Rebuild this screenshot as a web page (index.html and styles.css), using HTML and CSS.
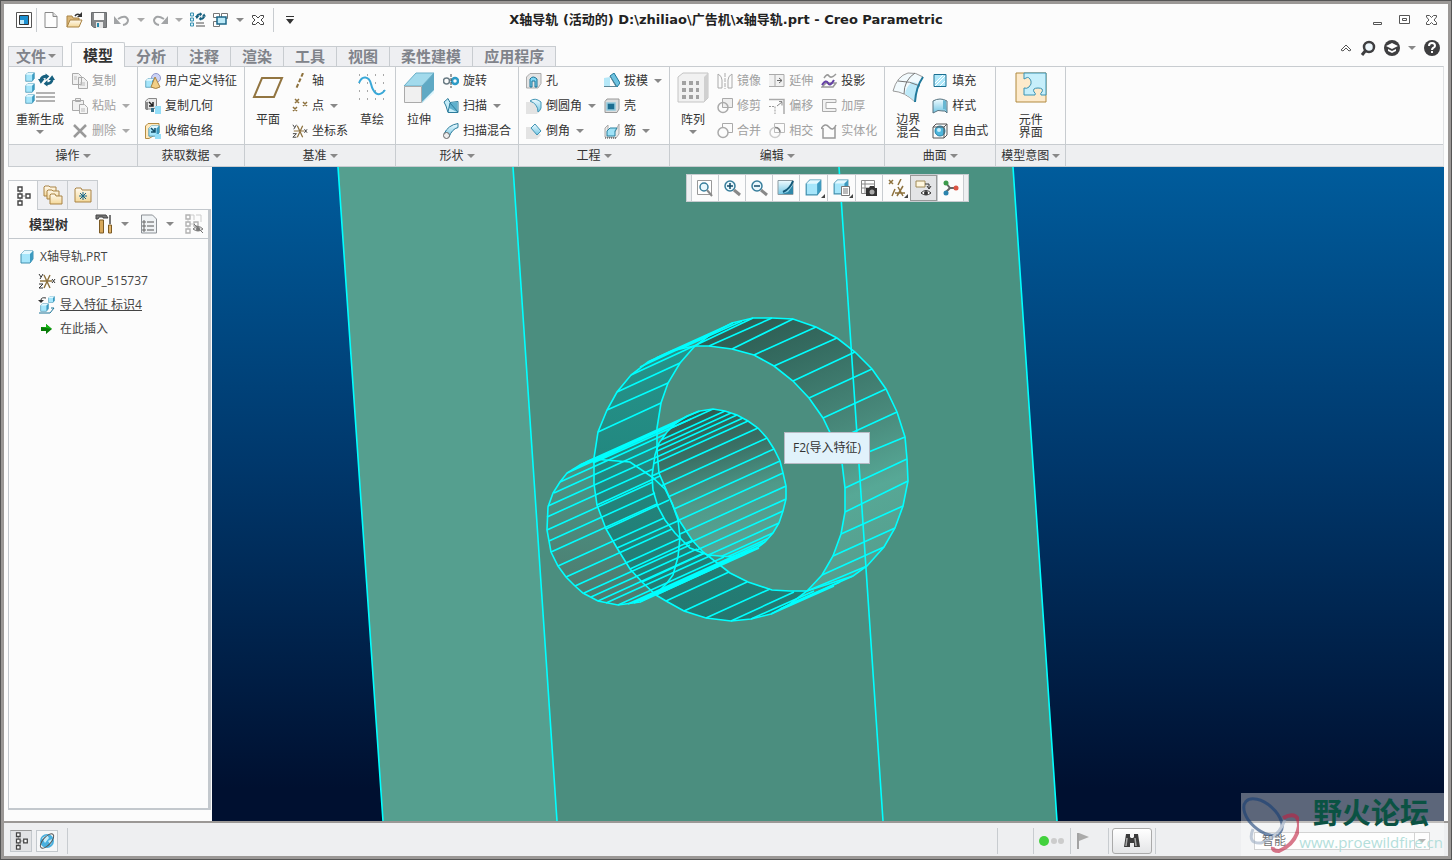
FILE: index.html
```html
<!DOCTYPE html>
<html lang="zh-Hans">
<head>
  <meta charset="UTF-8">
  <meta name="viewport" content="width=device-width, initial-scale=1.0">
  <title>X轴导轨 - Creo Parametric</title>
  <link rel="stylesheet" href="styles.css">
</head>
<body>
  <!-- shared icons -->
  <svg class="defs" width="0" height="0" aria-hidden="true">
    <symbol id="i-tree" viewBox="0 0 16 20">
      <path d="M5 5v10M5 10h5" stroke="#888" fill="none"/>
      <path d="M3 1h4v4H3zM3 8h4v4H3zM3 15h4v4H3zM11 8h4v4h-4z" fill="#fff" stroke="#444" stroke-width="1.4"/>
    </symbol>
    <symbol id="i-csys" viewBox="0 0 18 18">
      <path d="M2 9h12M6 3l6 13M12 3L6 16" stroke="#8d713d" stroke-width="1.4" fill="none"/>
      <path d="M1 2l2 3M5 2L2 7M14 7l3 4M17 7l-3 4M1 12h4l-4 4h4" stroke="#333" fill="none"/>
    </symbol>
    <symbol id="i-refresh" viewBox="0 0 18 14">
      <path d="M3 7q1-4 6-4" stroke="#17607f" stroke-width="3" fill="none"/>
      <path d="M8 0l4 3-4 4zM0 6h7L3 11zM18 7h-7l4-5z" fill="#17607f"/>
      <path d="M15 7q-1 4-6 4" stroke="#17607f" stroke-width="3" fill="none"/>
      <path d="M10 7v7l-4-3z" fill="#17607f"/>
    </symbol>
    <symbol id="i-cube" viewBox="0 0 14 14">
      <path d="M1 4l3-3h9v8l-3 4H1z" fill="#a6e6fb" stroke="#3f8fae"/>
      <path d="M1 4l3-3h9l-3 3z" fill="#e2f8ff"/><path d="M10 4l3-3v8l-3 4z" fill="#3c9ac0"/>
    </symbol>
    <linearGradient id="g-blue" x2="0" y2="1"><stop offset="0" stop-color="#effbff"/><stop offset="1" stop-color="#72c6e4"/></linearGradient>
    <linearGradient id="g-fold" x2="0" y2="1"><stop offset="0" stop-color="#fffaf0"/><stop offset="1" stop-color="#f4d898"/></linearGradient>
  </svg>

  <div class="window">
    <header class="titlebar">
      <div class="quick">
        <button aria-label="窗口"><svg width="16" height="16"><path d="M.5.5h15v15H.5z" fill="#fff" stroke="#555"/><path d="M3.500 3.500h9v9h-9z" fill="#1b8fd0" stroke="#333"/><path d="M4 8h4v4H4z" fill="#bde9fb"/></svg></button>
        <i class="sep"></i>
        <button aria-label="新建"><svg width="16" height="16"><path d="M2 .5h8l4 4v11H2z" fill="#fdfdfd" stroke="#888"/><path d="M10 .5v4h4" fill="#ddd" stroke="#888"/></svg></button>
        <button aria-label="打开"><svg width="18" height="16"><path d="M1 15V4h5l1 2h6v3" fill="#dcb878" stroke="#a98344"/><path d="M1 15l3-7h12l-3 7z" fill="url(#g-fold)" stroke="#a98344"/><path d="M9 4q2-3 5-1" fill="none" stroke="#333" stroke-width="1.5"/><path d="M16 0v5h-5z" fill="#333"/></svg></button>
        <button aria-label="保存"><svg width="16" height="16"><path d="M.5.5h15v15H3l-2.500-2z" fill="#848688" stroke="#6c6e70"/><path d="M3 1h10v7H3z" fill="#fafafa"/><path d="M5 10h7v6H5z" fill="#e8e8e8"/><path d="M6 11h2v4H6z" fill="#278aac"/></svg></button>
        <button aria-label="撤消"><svg width="16" height="14"><path d="M4 6q8-5 10 1 0 4-5 5" fill="none" stroke="#a2a4a6" stroke-width="2"/><path d="M0 3v8h7z" fill="#a2a4a6"/></svg></button>
        <button aria-label="撤消列表"><i class="caret light"></i></button>
        <button aria-label="重做"><svg width="16" height="14"><path d="M12 6Q4 1 2 7q0 4 5 5" fill="none" stroke="#a2a4a6" stroke-width="2"/><path d="M16 3v8H9z" fill="#a2a4a6"/></svg></button>
        <button aria-label="重做列表"><i class="caret light"></i></button>
        <button aria-label="重新生成模型"><svg width="16" height="16"><path d="M.5 1h3v3h-3zM.5 6h3v3h-3zM.5 11h3v3h-3z" fill="#d7f3fc" stroke="#3b91b1"/><path d="M6 11h8M6 14h9" stroke="#888" stroke-width="1.5"/><use href="#i-refresh" x="5" width="11" height="9"/></svg></button>
        <button aria-label="窗口切换"><svg width="16" height="16"><path d="M.5 1.500h6v4h-6zM8.500 1.500h6v5h-6zM.5 9.500h6v5h-6z" fill="#fff" stroke="#777"/><path d="M4 5h9v7H4z" fill="#bdeaf8" stroke="#1c6788" stroke-width="1.500"/></svg></button>
        <button aria-label="窗口列表"><i class="caret"></i></button>
        <button aria-label="关闭窗口"><svg width="14" height="14"><path d="M1.500 2.500h3L7 5l2.500-2.500h3v2L10 7l2.500 2.500v2h-3L7 9l-2.500 2.500h-3v-2L4 7 1.500 4.500z" fill="#fff" stroke="#444"/></svg></button>
        <i class="sep"></i>
        <button aria-label="自定义"><svg width="10" height="10"><path d="M1 1h8v1H1zM1 4h8L5 9z" fill="#333"/></svg></button>
      </div>
      <h1>X轴导轨 (活动的) D:\zhiliao\广告机\x轴导轨.prt - Creo Parametric</h1>
      <div class="winctl">
        <button aria-label="最小化"><svg width="12" height="12"><path d="M1.500 8.500h8v2h-8z" fill="#fff" stroke="#555"/></svg></button>
        <button aria-label="最大化"><svg width="12" height="12"><path d="M.5 1.500h10v8H.5zM3.500 4.500h4v2h-4z" fill="#fff" stroke="#555"/></svg></button>
        <button aria-label="关闭"><svg width="12" height="12"><path d="M.5 1.500h3l2 2 2-2h3v1.500L8 6l2.500 2.500v2h-3l-2-2-2 2h-3v-2L3 6 .5 3z" fill="#fff" stroke="#555"/></svg></button>
      </div>
    </header>

    <nav class="tabs">
      <button class="file">文件<i class="caret"></i></button>
      <button class="active">模型</button>
      <button>分析</button>
      <button>注释</button>
      <button>渲染</button>
      <button>工具</button>
      <button>视图</button>
      <button>柔性建模</button>
      <button>应用程序</button>
      <div class="help">
        <button aria-label="折叠功能区"><svg width="12" height="10"><path d="M1 7l5-5 5 5-2 1-3-3-3 3z" fill="#fff" stroke="#555"/></svg></button>
        <button aria-label="搜索"><svg width="16" height="16"><circle cx="9" cy="7" r="5" fill="#eef7fc" stroke="#3e3e40" stroke-width="2.500"/><path d="M6 10l-4 5" stroke="#3e3e40" stroke-width="3"/></svg></button>
        <button aria-label="学习"><svg width="16" height="16"><circle cx="8" cy="8" r="8" fill="#3e3e40"/><path d="M2 6l6-3 6 3-6 3zM4 9l4 2 4-2v2l-4 2-4-2z" fill="#fff"/></svg></button>
        <button aria-label="学习列表"><i class="caret"></i></button>
        <button aria-label="帮助"><svg width="16" height="16"><circle cx="8" cy="8" r="8" fill="#3e3e40"/><path d="M5 6q0-3 3-3t3 3q0 1-2 2-1 1-1 2" fill="none" stroke="#fff" stroke-width="2"/><path d="M7 11h2v2H7z" fill="#fff"/></svg></button>
      </div>
    </nav>

    <div class="ribbon">
      <section class="group">
        <div class="tools">
          <button class="big"><svg width="32" height="32"><g transform="translate(1 0)"><use href="#i-cube" width="10" height="10"/><use href="#i-cube" y="11" width="10" height="10"/><use href="#i-cube" y="22" width="10" height="10"/></g><path d="M12 21h19M12 25h19M12 29h19" stroke="#999" stroke-width="1.500"/><use href="#i-refresh" x="14" y="1" width="17" height="14"/></svg><span>重新生成</span><i class="caret"></i></button>
          <div class="col">
            <button class="off"><svg width="16" height="16"><path d="M.5.5h6l3 3v8h-9zM6.500 4.500h5l4 4v7h-9z" fill="#f1f1f1" stroke="#aaa"/><path d="M8 10h5M8 12h5M2 4h3M2 6h3" stroke="#bbb"/></svg>复制</button>
            <button class="off"><svg width="16" height="16"><path d="M.5 2.500h11v10H.5zM3.500.5h5v3h-5z" fill="#f1f1f1" stroke="#aaa"/><path d="M7.500 6.500h5l3 3v6h-8z" fill="#f5f5f5" stroke="#aaa"/><path d="M9 11h4M9 13h4" stroke="#bbb"/></svg>粘贴<i class="caret light"></i></button>
            <button class="off"><svg width="16" height="16"><path d="M2 2l12 12M14 2L2 14" stroke="#999" stroke-width="2.500"/></svg>删除<i class="caret light"></i></button>
          </div>
        </div>
        <button class="name">操作<i class="caret"></i></button>
      </section>

      <section class="group">
        <div class="tools">
          <div class="col">
            <button><svg width="16" height="16"><circle cx="11" cy="5" r="4.500" fill="#ccd3f6" stroke="#8e96c9"/><use href="#i-cube" y="5" width="10" height="10"/><path d="M10 4l5 10q-4 3-9 0z" fill="#f1cf86" stroke="#a98344"/></svg>用户定义特征</button>
            <button><svg width="16" height="16"><path d="M.5 3l3-2.500h8V9l-3 2h-8z" fill="#e8e8e8" stroke="#888"/><path d="M1 4v8h2V4" fill="#888"/><path d="M4 4l4 4M8 4v4H4" fill="none" stroke="#222" stroke-width="1.500"/><path d="M10 8h6v8h-6z" fill="#94def8"/><path d="M6 10h3v4H6z" fill="#35718a"/></svg>复制几何</button>
            <button><svg width="16" height="16"><path d="M.5 3L3 .5h11v9L4 15.500H.5z" fill="#ffe9bd" stroke="#b48d44"/><use href="#i-cube" x="3" y="2" width="12" height="12"/><path d="M6 5l4 4M10 5v4H6" fill="none" stroke="#134f69" stroke-width="1.500"/><path d="M10 11h6v5h-6z" fill="#94def8"/></svg>收缩包络</button>
          </div>
        </div>
        <button class="name">获取数据<i class="caret"></i></button>
      </section>

      <section class="group">
        <div class="tools">
          <button class="big"><svg width="32" height="32"><path d="M10 6h20l-8 19H2z" fill="#fcfcfc" stroke="#927541" stroke-width="2"/></svg><span>平面</span></button>
          <div class="col">
            <button><svg width="16" height="16"><path d="M11 0L4 16" stroke="#8d713d" stroke-width="2" stroke-dasharray="4 2"/></svg>轴</button>
            <button><svg width="16" height="16"><path d="M3 1l4 4M7 1L3 5M11 4l4 4M15 4l-4 4M1 9l4 4M5 9l-4 4" stroke="#8d713d" stroke-width="1.500"/></svg>点<i class="caret"></i></button>
            <button><svg width="16" height="16"><use href="#i-csys" width="16" height="16"/></svg>坐标系</button>
          </div>
          <button class="big"><svg width="32" height="32"><path d="M3 3h26M3 11h26M3 19h26M3 27h26" stroke="#555" stroke-dasharray="1 7"/><path d="M3 11C6 3 13 4 15 12s7 15 14 6" fill="none" stroke="#39a8d8" stroke-width="2"/></svg><span>草绘</span></button>
        </div>
        <button class="name">基准<i class="caret"></i></button>
      </section>

      <section class="group">
        <div class="tools">
          <button class="big"><svg width="32" height="32"><path d="M1 14L13 1h18L19 14z" fill="#a2daec" stroke="#6aafc8"/><path d="M19 14L31 1v19L19 31z" fill="#5fa9c4"/><path d="M19 30l12-12v3L19 31z" fill="#dff6fd"/><path d="M1.500 14.500h17v16h-17z" fill="#f0f0f0" stroke="#aaa"/></svg><span>拉伸</span></button>
          <div class="col">
            <button><svg width="16" height="16"><circle cx="3.500" cy="8" r="3" fill="none" stroke="#6a7b84" stroke-width="1.500"/><circle cx="12" cy="8" r="3" fill="none" stroke="#2d9bc6" stroke-width="2.500"/><path d="M8 1v14" stroke="#444" stroke-dasharray="3 1"/></svg>旋转</button>
            <button><svg width="16" height="16"><path d="M1 4l4-3.500 2 4 8-1v11H5L3 8z" fill="#c4ecf8" stroke="#2d7c9b"/><path d="M7 5l7-1v10l-8-4z" fill="#5fb0cd"/><path d="M5 14l2-9 8 9" fill="none" stroke="#2d7c9b"/></svg>扫描<i class="caret"></i></button>
            <button><svg width="16" height="16"><path d="M1 11Q5 2 15 .5v4Q9 6 6 14z" fill="url(#g-blue)" stroke="#2d7c9b"/><circle cx="3.500" cy="12.500" r="3" fill="#eee" stroke="#666"/></svg>扫描混合</button>
          </div>
        </div>
        <button class="name">形状<i class="caret"></i></button>
      </section>

      <section class="group">
        <div class="tools">
          <div class="col">
            <button><svg width="16" height="16"><path d="M.5 4L4 .5h11v10L12 15H.5z" fill="#e4e4e4" stroke="#aaa"/><path d="M4 14V6q3-4 7 0v8H9V8H6v6z" fill="#7fd6f4" stroke="#1b7396"/></svg>孔</button>
            <button><svg width="16" height="16"><path d="M0 4h6l9 8-4 4H0z" fill="#e3e3e3"/><path d="M4 3Q9-1 15 4v6q-1 3-3 4 0-8-8-11z" fill="url(#g-blue)" stroke="#4194b4"/></svg>倒圆角<i class="caret"></i></button>
            <button><svg width="16" height="16"><path d="M0 4h6l9 8-4 4H0z" fill="#e3e3e3"/><path d="M5 5l4-4 6 7-4 4z" fill="url(#g-blue)" stroke="#4194b4"/></svg>倒角<i class="caret"></i></button>
          </div>
          <div class="col">
            <button><svg width="16" height="16"><path d="M0 5l6-1v9H0z" fill="#b6e8f8"/><path d="M6 3l4-3 6 10-3 4z" fill="#6ec2e0" stroke="#1f7899"/><path d="M0 13.500h12L6 3" fill="none" stroke="#5d8494"/></svg>拔模<i class="caret"></i></button>
            <button><svg width="16" height="16"><path d="M1 3.500L3 1h12v10l-2 3.500H1z" fill="#ddd" stroke="#999"/><path d="M3 5h8v7H3z" fill="#1c6d90" stroke="#93c9dc" stroke-width="1.500"/></svg>壳</button>
            <button><svg width="16" height="16"><path d="M1 14V5l3-3v6l7 1 4-8v10l-3 4z" fill="#e8e8e8" stroke="#aaa"/><path d="M3 8l3-3h7l-2 3v5H3z" fill="#9fe2f7" stroke="#2a819f"/><path d="M1 15h11" stroke="#333" stroke-dasharray="1 1"/></svg>筋<i class="caret"></i></button>
          </div>
        </div>
        <button class="name">工程<i class="caret"></i></button>
      </section>

      <section class="group">
        <div class="tools">
          <button class="big"><svg width="32" height="32"><path d="M1 5l5-4h25v25l-4 4H1z" fill="#f1f1f1" stroke="#c4c4c4"/><path d="M27 5l4-4v25l-4 4z" fill="#d0d0d0"/><path d="M5 11h17M5 18h17M5 25h17" stroke="#a1a1a1" stroke-width="4" stroke-dasharray="4 3"/></svg><span>阵列</span><i class="caret"></i></button>
          <div class="col">
            <button class="off"><svg width="16" height="16"><path d="M1 1q4 2 4 6v8H1zM15 1q-4 2-4 6v8h4z" fill="none" stroke="#aaa"/><path d="M8 0v16" stroke="#aaa" stroke-dasharray="4 1"/></svg>镜像</button>
            <button class="off"><svg width="16" height="16"><path d="M5.500.5h10v9h-10z" fill="#eee" stroke="#aaa"/><circle cx="6" cy="9.500" r="5" fill="none" stroke="#aaa" stroke-width="1.500"/></svg>修剪</button>
            <button class="off"><svg width="16" height="16"><path d="M5.500.5h10v9h-10z" fill="none" stroke="#aaa"/><circle cx="6" cy="9.500" r="5" fill="#fcfcfc" stroke="#aaa" stroke-width="1.500"/></svg>合并</button>
          </div>
          <div class="col">
            <button class="off"><svg width="16" height="16"><path d="M0 1.500h15v12H0M6 2v11" fill="#f1f1f1" stroke="#aaa"/><path d="M8 7.500h5M10 5l3 2.500L10 10" stroke="#666" fill="none"/></svg>延伸</button>
            <button class="off"><svg width="16" height="16"><path d="M0 1.500h15V16" fill="none" stroke="#aaa" stroke-width="1.500"/><path d="M0 8.500h6V16" fill="none" stroke="#999" stroke-dasharray="2 1"/><path d="M8 8l5-4M10 3.500h3v4" stroke="#888" fill="none"/></svg>偏移</button>
            <button class="off"><svg width="16" height="16"><path d="M5.500.5h10v9h-10z" fill="none" stroke="#bbb"/><circle cx="6" cy="9.500" r="5" fill="none" stroke="#ccc" stroke-width="1.500"/><path d="M6 4.500q5 0 5 5" fill="none" stroke="#888" stroke-width="1.500"/></svg>相交</button>
          </div>
          <div class="col">
            <button><svg width="16" height="16"><path d="M3 5q3-5 5-2t7-2M1 14l4-4h10l-3 4z" fill="none" stroke="#999" stroke-width="1.500"/><path d="M1 12q4-6 6-2t6-3" fill="none" stroke="#6541a5" stroke-width="2"/></svg>投影</button>
            <button class="off"><svg width="16" height="16"><path d="M15 1.500H1.500v12H15v-3H5v-6h10z" fill="#f2f2f2" stroke="#aaa"/></svg>加厚</button>
            <button class="off"><svg width="16" height="16"><path d="M0 6Q4-1 8 4t7-2M2 5v10h12V4" fill="none" stroke="#999" stroke-width="1.500"/></svg>实体化</button>
          </div>
        </div>
        <button class="name">编辑<i class="caret"></i></button>
      </section>

      <section class="group">
        <div class="tools">
          <button class="big"><svg width="32" height="32"><path d="M1 19Q5 4 16 1q8-1 15 4-7 10-8 25Q13 20 1 19z" fill="#f2fafd" stroke="#999"/><path d="M20 10q4 0 8 3-4 7-5 17-4-5-10-8 1-7 7-12z" fill="#bde9f8"/><path d="M12 22Q12 8 23 1M6 9q12 0 22 5" fill="none" stroke="#777"/><path d="M31 5q-7 10-8 25" fill="none" stroke="#20799b" stroke-width="2"/></svg><span>边界<br>混合</span></button>
          <div class="col">
            <button><svg width="16" height="16"><path d="M2 1.500h12v12H2z" fill="#aee7f9" stroke="#1b6f91"/><path d="M3 10l8-8M3 13L13 3M8 13l5-5" stroke="#fff"/></svg>填充</button>
            <button><svg width="16" height="16"><path d="M1 3q7-4 14 0v12q-2-3-4-2-5-2-10 2z" fill="url(#g-blue)" stroke="#54717e"/><path d="M14 3v9q-1-1-3-1V2z" fill="#67b7d2"/></svg>样式</button>
            <button><svg width="16" height="16"><circle cx="8" cy="8" r="5" fill="#4eb6dd" stroke="#2282a6"/><circle cx="7" cy="7" r="2" fill="#c9f0fc"/><path d="M1 4l3-3h11v11l-3 3H1zM1 4h11v11M12 4l3-3" fill="none" stroke="#555"/></svg>自由式</button>
          </div>
        </div>
        <button class="name">曲面<i class="caret"></i></button>
      </section>

      <section class="group last">
        <div class="tools">
          <button class="big"><svg width="32" height="32"><path d="M1 1h30v29H1z" fill="#fdeacb" stroke="#b0893f"/><path d="M9 1h22v22h-5q-1-2 1-3 2-4-4-4t-4 4q2 1 1 3H9v-7q3 1 5-1 3-3 2-6-2-5-5-3l-2 1z" fill="#c6effb" stroke="#3b93b4"/></svg><span>元件<br>界面</span></button>
        </div>
        <button class="name">模型意图<i class="caret"></i></button>
      </section>
      <div class="group rest"><div class="tools"></div><div class="name"></div></div>
    </div>

    <main class="work">
      <aside class="side">
        <div class="side-tabs">
          <button class="active" aria-label="模型树"><svg width="16" height="20"><use href="#i-tree" width="16" height="20"/></svg></button>
          <button aria-label="文件夹浏览器"><svg width="20" height="20"><g fill="url(#g-fold)" stroke="#a98344"><path d="M1 11V2l1-1h4l1 1h6v9z"/><path d="M4 14V6l1-1h4l1 1h6v8z"/><path d="M7 19v-9l1-1h4l1 2h6v8z"/></g></svg></button>
          <button aria-label="收藏夹"><svg width="18" height="18"><path d="M1 16V3l1-1h5l1 2h9v12z" fill="url(#g-fold)" stroke="#a98344"/><path d="M9 6v8M5 10h8M6 7l6 6M12 7l-6 6" stroke="#16678a"/></svg></button>
        </div>
        <div class="panel">
          <div class="panel-head">
            <h2>模型树</h2>
            <button aria-label="设置"><svg width="18" height="20"><path d="M1 1h10l2 3H8V3H4L3 5H1z" fill="#777" stroke="#444"/><path d="M4.500 6h4v13h-4z" fill="#d7a85b" stroke="#7b5a24"/><path d="M15 1v9" stroke="#777" stroke-width="2"/><path d="M13.500 11h3v8h-3z" fill="#e2b56b" stroke="#7b5a24"/></svg><i class="caret"></i></button>
            <button aria-label="显示"><svg width="18" height="20"><path d="M1.500 1h11l4 4v14h-15z" fill="#f0f3f5" stroke="#8c9196"/><path d="M7 8h7M7 12h7M7 16h7" stroke="#555"/><path d="M3 7h2v2H3zM3 11h2v2H3zM3 15h2v2H3z" fill="none" stroke="#666"/></svg><i class="caret"></i></button>
            <button class="dim" aria-label="隐藏项"><svg width="22" height="20"><use href="#i-tree" width="16" height="20" opacity=".4"/><path d="M8 1h3v5M13 1h5v7" fill="none" stroke="#ccc"/><path d="M10 15q5-5 10 0-5 4-10 0zM11 10l9 9" fill="#ddd" stroke="#777"/><circle cx="15" cy="15" r="2" fill="#777"/></svg></button>
          </div>
          <ul class="tree">
            <li><svg width="14" height="14"><use href="#i-cube" width="14" height="14"/></svg>X轴导轨.PRT</li>
            <li class="sub"><svg width="18" height="18"><use href="#i-csys" width="18" height="18"/></svg>GROUP_515737</li>
            <li class="sub"><svg width="18" height="18"><use href="#i-cube" x="10" y="0" width="7" height="7"/><path d="M8 2Q3 1 3 4" fill="none" stroke="#333"/><path d="M0 4h6L3 7z" fill="#333"/><use href="#i-cube" x="2" y="7" width="9" height="9"/><path d="M1 17h11l4-5h-3" fill="none" stroke="#1b7396"/></svg><a href="#feature">导入特征 标识4</a></li>
            <li class="sub"><svg width="18" height="14"><path d="M3 5h5V2l6 5-6 5V9H3z" fill="#087c08"/><path d="M3 5h5V2l6 5z" fill="#16b516"/></svg>在此插入</li>
          </ul>
        </div>
      </aside>

      <div class="view">
        <svg class="model" viewBox="212 167 1232 654" preserveAspectRatio="xMidYMid slice" role="img" aria-label="三维模型">
          <defs>
            <linearGradient id="g-ring" gradientUnits="userSpaceOnUse" x1="740" y1="320" x2="850" y2="600">
              <stop offset="0" stop-color="#2d5c52"/><stop offset=".18" stop-color="#356c61"/><stop offset=".45" stop-color="#48887a"/><stop offset=".68" stop-color="#57a896"/><stop offset="1" stop-color="#559c8c"/>
            </linearGradient>
            <linearGradient id="g-bore" gradientUnits="userSpaceOnUse" x1="700" y1="410" x2="740" y2="555">
              <stop offset="0" stop-color="#2d5a50"/><stop offset=".3" stop-color="#3a7166"/><stop offset=".6" stop-color="#4f9989"/><stop offset="1" stop-color="#58a797"/>
            </linearGradient>
            <linearGradient id="g-teal" x2="0" y2="1"><stop offset="0" stop-color="#25948b"/><stop offset=".5" stop-color="#22857d"/><stop offset="1" stop-color="#247870"/></linearGradient>
            <linearGradient id="g-boss" x2="0" y2="1"><stop offset=".2" stop-color="#4a9283"/><stop offset="1" stop-color="#4e7a6e"/></linearGradient>
            <path id="ring-front" d="M694 346l15 0 23 3 22 6 20 11 19 15 16 17 14 20 11 23 8 22 3 25v24l-4 22-8 22-11 19-15 16-17 13-19 10-20 5-20 2-25-3-22-7-18-10-10-6-14-13-12-13-13-21-11-19-9-24-3-21v-26l4-26 9-22 10-18 14-17 17-13 23-11z"/>
            <path id="ring-back" d="M753 318l19 0 21 1 23 8 21 11 18 14 17 17 14 20 11 23 8 25 2 22 1 22-5 25-8 22-11 19-17 19-14 10-46 15-17 0-18-1-24-8-18-9-27-21-11-12-13-20-20-47-2-23v-22l4-25 7-20 12-20 14-16 17-13 21-11z"/>
            <path id="bore-front" d="M593 459l37 3 22 15 13 12 7 14 6 17 2 17-2 20-5 18-6 8-10 10-17 9-22 3-20-4-15-8-8-7-9-9-8-11-7-14-4-22 1-23 5-14 7-11 7-9 13-8z"/>
            <path id="bore-back" d="M700 411l13-2 12 2 12 4 11 6 10 7 9 10 7 11 6 12 3 12 3 13v13l-3 12-4 12-6 10-8 9-8 6-25 9-24-2-18-7-15-15-10-13-7-13-5-17-1-14 3-21 4-12 8-11 9-9 11-7z"/>
            <clipPath id="c-front"><use href="#ring-front"/></clipPath>
            <clipPath id="c-back"><use href="#ring-back"/></clipPath>
            <clipPath id="c-bore"><use href="#bore-back"/></clipPath>
          </defs>
          <path d="M338 167h175l44 654H383z" fill="#559f8f"/>
          <path d="M513 167h326l44 654H557z" fill="#4b8e7f"/>
          <path d="M839 167h174l44 654H883z" fill="#4a9181"/>
          <use href="#bore-front" fill="url(#g-boss)"/>
          <use href="#ring-back" fill="url(#g-ring)"/>
          <use href="#ring-front" fill="url(#g-teal)"/>
          <g clip-path="url(#c-front)"><use href="#ring-back" fill="#4b8e7f"/></g>
          <g clip-path="url(#c-back)"><use href="#bore-back" fill="url(#g-bore)"/></g>
          <g class="edge">
            <path d="M338 167l45 654M513 167l44 654M839 167l44 654M1013 167l44 654"/>
            <use href="#ring-front"/><use href="#ring-back"/><use href="#bore-front"/><use href="#bore-back"/>
            <!-- large bore facets -->
            <path d="M709 346l63-28M732 349l61-30M754 355l62-28M774 366l63-28M793 381l62-29M809 398l63-29M823 418l63-29M834 441l63-29M842 463l63-26M845 488l62-29M845 512l63-31M841 534l62-28M833 556l62-28M822 575l62-28M807 591l60-25M790 604l63-28M771 614l63-28M751 619l63-28M731 621l63-29M706 618l64-29M684 611l63-29M666 601l63-29M656 595l63-29"/>
            <path d="M598 432l63-29M607 410l61-27M617 392l63-29M631 375l63-29M640 367l58-27M648 362l63-28M656 358l60-27M671 351l62-28M682 348l60-27M694 346l59-28M597 505l63-29M606 529l63-29M617 548l63-28M630 569l63-29M642 582l63-29M780 609l60-27"/>
            <!-- small cylinder facets -->
            <path d="M593 459l106-48M593 463l98-44M586 462l100-45M580 465l106-48M572 470l106-48M567 473l106-48M560 482l106-48M554 493l106-48M548 506l106-48M547 517l106-48M547 530l106-48M549 541l106-48M551 552l106-48M558 566l106-48M566 577l106-48M575 586l106-48M584 593l106-48M591 597l106-48M598 601l106-48M606 603l106-48M618 605l106-48M628 604l106-48M634 603l106-48M640 602l106-48M650 597l106-48M657 593l100-45M653 596l106-48"/>
            <g clip-path="url(#c-bore)">
              <path d="M713 409l-106 48M725 411l-106 48M737 415l-106 48M748 421l-106 48M758 428l-106 48M767 438l-106 48M774 449l-106 48M780 461l-106 48M783 473l-106 48M786 486l-106 48M786 499l-106 48M783 511l-106 48M779 523l-106 48M773 533l-106 48M765 542l-106 48M757 548l-106 48M731 413l-106 48M743 418l-106 48M769 538l-106 48M750 551l-106 48"/>
            </g>
          </g>
        </svg>

        <div class="viewbar">
          <button aria-label="重新调整"><svg width="18" height="18"><path d="M1.500 1.500h14v14h-14z" fill="#fff" stroke="#999"/><circle cx="8" cy="8" r="4" fill="#eaf8fd" stroke="#387e9c" stroke-width="1.500"/><path d="M11 11l5 6" stroke="#888" stroke-width="2"/></svg></button>
          <button aria-label="放大"><svg width="18" height="18"><circle cx="7" cy="7" r="5" fill="#eaf8fd" stroke="#387e9c" stroke-width="1.500"/><path d="M4 7h6M7 4v6" stroke="#134b68" stroke-width="1.500"/><path d="M11 11l6 5" stroke="#888" stroke-width="3"/></svg></button>
          <button aria-label="缩小"><svg width="18" height="18"><circle cx="7" cy="7" r="5" fill="#eaf8fd" stroke="#387e9c" stroke-width="1.500"/><path d="M4 7h6" stroke="#134b68" stroke-width="1.500"/><path d="M11 11l6 5" stroke="#888" stroke-width="3"/></svg></button>
          <button aria-label="重画"><svg width="18" height="18"><path d="M1 1.500h15v14H1z" fill="url(#g-blue)" stroke="#8d9ba2"/><path d="M16 6l-5 7-6 2h11z" fill="#3087a8"/><path d="M16 2Q13 10 6 13" fill="none" stroke="#125776" stroke-width="2"/></svg></button>
          <button class="more" aria-label="显示样式"><svg width="18" height="18"><use href="#i-cube" width="17" height="17"/></svg></button>
          <button class="more" aria-label="已保存方向"><svg width="18" height="18"><use href="#i-cube" width="16" height="16"/><path d="M8.500 7.500h8v9h-8z" fill="#fff" stroke="#777"/><path d="M10 10h5M10 12h5M10 14h5" stroke="#777"/></svg></button>
          <button aria-label="视图管理器"><svg width="18" height="18"><path d="M1.500 1.500h13v13h-13zM1.500 5h13M1.500 9h13M5 1.500v13" fill="#fff" stroke="#888"/><path d="M6 9h3l1-2h4l1 2h2v8H6z" fill="#333"/><circle cx="12" cy="13" r="2.500" fill="#aaa"/></svg></button>
          <button class="more" aria-label="基准显示过滤器"><svg width="18" height="18"><path d="M1 1l4 4M5 1L1 5M13 0l-3 6M7 10l-3 7M7 14h10M9 17l6-10M10 8l5 9" stroke="#8d713d" stroke-width="1.500" fill="none"/></svg></button>
          <button class="on" aria-label="注释显示"><svg width="18" height="18"><path d="M1 2h9v6H1z" fill="#fff7df" stroke="#a08a56"/><path d="M10 5h4v4M12 7l2 3 2-3" stroke="#333" fill="none"/><path d="M6 14q5-5 10 0-5 4-10 0z" fill="#fff" stroke="#333"/><circle cx="11" cy="14" r="2" fill="#333"/></svg></button>
          <button aria-label="旋转中心"><svg width="18" height="18"><path d="M4 4l4 5 7 0M8 9l-5 5" stroke="#666" stroke-width="2" fill="none"/><circle cx="4" cy="4" r="2.500" fill="#3d9b4c"/><circle cx="14" cy="9" r="2.500" fill="#db5544"/><circle cx="4" cy="14" r="2.500" fill="#2c84ae"/></svg></button>
        </div>
        <div class="tip">F2(导入特征)</div>
      </div>
    </main>

    <footer class="status">
      <button class="sq on" aria-label="模型树显示"><svg width="16" height="18"><use href="#i-tree" width="16" height="18"/></svg></button>
      <button class="sq" aria-label="浏览器"><svg width="18" height="18"><circle cx="9" cy="9" r="7" fill="#4ab0df"/><path d="M4 6l5-3 2 3-4 5zM10 9l4-2-1 6z" fill="#c8eefb"/><ellipse cx="9" cy="9" rx="9" ry="4" fill="none" stroke="#555" transform="rotate(-48 9 9)"/></svg></button>
      <i class="sep"></i>
      <div class="state">
        <i class="sep"></i>
        <i class="sep"></i>
        <svg width="30" height="14"><circle cx="7" cy="7" r="5" fill="#42d13d"/><circle cx="17" cy="7" r="3" fill="#ccc"/><circle cx="24" cy="7" r="3" fill="#ccc"/></svg>
        <i class="sep"></i>
        <svg class="flag" width="14" height="18"><path d="M1 1v16" stroke="#888" stroke-width="1.500"/><path d="M2 1l10 4-10 4z" fill="#aaa"/></svg>
        <i class="sep"></i>
        <button class="find" aria-label="查找"><svg width="18" height="16"><path d="M3 1h4v3l1 1h2l1-1V1h4l2 13h-6v-4H7v4H1z" fill="#3b3b3b"/><path d="M4 5L3 13M12 5l1 8" stroke="#aaa" stroke-width="1.500"/></svg></button>
        <i class="sep"></i>
      </div>
      <div class="filter">
        <select aria-label="选择过滤器"><option>智能</option></select>
        <i class="caret"></i>
      </div>
    </footer>

    <div class="watermark">
      <svg width="58" height="62" viewBox="0 0 58 62"><g fill="none"><ellipse cx="22" cy="24" rx="23" ry="13" transform="rotate(42 22 24)" stroke="#163e75" stroke-width="3"/><path d="M12 36q-6 15 8 14 17-5 24-23" stroke="#9cadc4" stroke-width="3"/><path d="M42 25q16-8 16 8-3 18-20 25-7 0-6-4" stroke="#c02040" stroke-width="4"/></g></svg>
      <div><strong>野火论坛</strong><span>www.proewildfire.cn</span></div>
    </div>
  </div>
</body>
</html>
```
FILE: styles.css
```css
* { margin: 0; padding: 0; box-sizing: border-box; }
body {
  font-family: "Open Sans", "Noto Sans CJK SC", sans-serif;
  font-size: 12px;
  line-height: 16px;
  color: #333;
  background: #fcfcfc;
}
button {
  display: flex;
  align-items: center;
  background: none;
  border: 0;
  font: inherit;
  color: inherit;
  white-space: nowrap;
}
svg { display: block; flex: none; }
.defs { position: absolute; }
.window {
  position: relative;
  display: flex;
  flex-direction: column;
  height: 100vh;
  border: 4px solid #9b9896;
  outline: 1px solid #555;
  outline-offset: -1px;
}
.caret {
  flex: none;
  border: 4px solid transparent;
  border-top-color: #888;
  border-bottom: 0;
}
.caret.light { border-top-color: #aaa; }
.sep {
  width: 1px;
  height: 24px;
  background: #c8ccd0;
}

/* title bar */
.titlebar {
  display: grid;
  grid-template-columns: 1fr auto 1fr;
  align-items: center;
  height: 32px;
}
.quick {
  display: flex;
  align-items: center;
  gap: 7px;
  padding-left: 12px;
}
.quick .sep { margin: 0 -4px 0 -3px; }
.quick .sep:last-of-type { margin: 0 1px; }
.quick .sep + button { margin-left: 3px; }
.titlebar h1 {
  font-family: "DejaVu Sans", "Noto Sans CJK SC", sans-serif;
  font-size: 13px;
  color: #222;
}
.winctl {
  display: flex;
  justify-content: flex-end;
  gap: 15px;
  padding-right: 10px;
}

/* tabs */
.tabs {
  display: flex;
  align-items: flex-end;
  height: 30px;
  padding: 0 4px;
  font-size: 15px;
  font-weight: bold;
  color: #80838a;
}
.tabs > button {
  height: 20px;
  padding: 0 11px 2px;
  background: #eeeff2;
  border: solid #c8ccd0;
  border-width: 1px 1px 0 0;
}
.tabs > .file {
  gap: 2px;
  padding: 0 6px 2px 7px;
  margin-right: 8px;
  border-left-width: 1px;
}
.tabs > .active {
  position: relative;
  z-index: 1;
  height: 25px;
  margin-bottom: -1px;
  padding: 0 11px;
  border-left-width: 1px;
  border-radius: 2px 2px 0 0;
  background: #fcfcfc;
  color: #333;
}
.help {
  display: flex;
  align-items: center;
  gap: 8px;
  height: 36px;
  margin-left: auto;
  padding-right: 4px;
}

/* ribbon */
.ribbon {
  display: flex;
  flex: none;
  margin: 0 4px;
  border: 1px solid #c8ccd0;
  border-right-color: #e0e2e4;
}
.group {
  display: flex;
  flex-direction: column;
  border-right: 1px solid #c8ccd0;
}
.group .tools {
  display: flex;
  flex: 1;
  justify-content: center;
  gap: 8px;
  min-height: 78px;
  padding: 1px 7px;
  border-bottom: 1px solid #c8ccd0;
}
.group .name {
  justify-content: center;
  gap: 3px;
  height: 21px;
  background: #eeeff1;
}
.group.last .name { padding: 0 5px; }
.group.rest { flex: 1; border: 0; }
.big {
  flex-direction: column;
  min-width: 32px;
  padding-top: 4px;
  line-height: 13px;
}
.big span { margin-top: 9px; }
.big .caret { margin-top: 4px; }
.col {
  display: grid;
  grid-template-rows: repeat(3, 25px);
}
.col button { gap: 4px; }
.col .caret { margin-left: 2px; }
.off { color: #a0a0a0; }

/* work area */
.work {
  display: flex;
  flex: 1;
  min-height: 0;
  padding-right: 4px;
}
.side {
  display: flex;
  flex-direction: column;
  flex: 0 0 208px;
  padding: 13px 0 11px 4px;
}
.side-tabs { display: flex; }
.side-tabs button {
  justify-content: center;
  width: 30px;
  height: 29px;
  background: #eeeff2;
  border: solid #c8ccd0;
  border-width: 1px 1px 0 0;
}
.side-tabs .active {
  position: relative;
  height: 30px;
  margin-bottom: -1px;
  border-left-width: 1px;
  background: #fcfcfc;
}
.panel {
  flex: 1;
  margin-right: 1px;
  border: 1px solid #c3c8cd;
  border-width: 1px 3px 2px 1px;
}
.panel-head {
  display: flex;
  align-items: center;
  gap: 11px;
  height: 29px;
  padding-left: 20px;
  border-bottom: 1px solid #c3c8cd;
}
.panel-head h2 {
  margin-right: 16px;
  font-size: 13px;
  line-height: 16px;
  white-space: nowrap;
}
.panel-head button { gap: 8px; }
.panel-head .dim { margin-left: -2px; }
.tree {
  padding: 6px 11px;
  list-style: none;
  color: #444;
}
.tree li {
  display: flex;
  align-items: center;
  gap: 6px;
  height: 24px;
}
.tree .sub { gap: 4px; padding-left: 18px; }
.tree a { color: inherit; }
.view {
  position: relative;
  flex: 1;
  min-width: 0;
  overflow: hidden;
  background: linear-gradient(#005c9c, #00386c 45%, #001030 95%);
}
.model { width: 100%; height: 100%; }
.edge { fill: none; stroke: #00ffff; stroke-width: 1.6; }
.viewbar {
  position: absolute;
  top: 7px;
  left: 474px;
  display: flex;
  padding: 0 4px;
  background: #eeeff1;
  border: 1px solid #c8ccd0;
}
.viewbar button {
  position: relative;
  justify-content: center;
  width: 27px;
  height: 26px;
  background: #fcfcfc;
  border-left: 1px solid #c8ccd0;
}
.viewbar .more { width: 28px; }
.viewbar button:last-child { border-right: 1px solid #c8ccd0; }
.viewbar .on {
  background: #e3e4e6;
  border: 1px solid #999;
}
.viewbar .more::after {
  content: "";
  position: absolute;
  right: 2px;
  bottom: 3px;
  border: 2px solid #444;
  border-top-color: transparent;
  border-left-color: transparent;
}
.tip {
  position: absolute;
  top: 265px;
  left: 572px;
  padding: 7px 8px;
  line-height: 16px;
  background: #e1f2fb;
  border: 1px solid #b9b9c4;
}

/* status bar */
.status {
  display: flex;
  align-items: center;
  gap: 4px;
  flex: none;
  height: 35px;
  padding: 2px 14px 0 6px;
  background: #eeeff1;
  border-top: 2px solid #9b9896;
}
.status .sep { height: 26px; }
.sq {
  justify-content: center;
  width: 22px;
  height: 22px;
  background: #f6f7f8;
  border: 1px solid #c3c8cd;
}
.sq.on { background: #e2e3e5; border-top: 1px solid #999; }
.sq + .sep { margin-left: 5px; }
.state {
  display: flex;
  align-items: center;
  gap: 3px;
  margin-left: auto;
  margin-right: 94px;
}
.state .sep:first-child { margin-right: 32px; }
.flag { margin: 0 14px 0 3px; }
.find {
  justify-content: center;
  width: 40px;
  height: 26px;
  background: linear-gradient(#fff, #e4e5e7);
  border: 1px solid #aaa;
  border-radius: 3px;
}
.filter {
  display: flex;
  align-items: center;
  width: 176px;
  height: 18px;
  margin-right: 4px;
  padding-right: 3px;
  background: #fdfdfd;
  border: 1px solid #bbb;
}
.filter select {
  flex: 1;
  height: 16px;
  margin-right: 3px;
  padding-left: 7px;
  appearance: none;
  font: inherit;
  line-height: 16px;
  color: #222;
  background: none;
  border: 0;
  border-right: 1px solid #bbb;
}

/* forum stamp */
.watermark {
  position: absolute;
  right: 4px;
  bottom: 0;
  display: flex;
  width: 203px;
  height: 63px;
  background: rgba(255, 255, 255, 0.36);
  pointer-events: none;
}
.watermark svg { opacity: 0.6; }
.watermark div {
  display: flex;
  flex-direction: column;
  align-items: flex-end;
  width: 144px;
}
.watermark strong {
  margin-right: 14px;
  font-size: 29px;
  line-height: 40px;
  white-space: nowrap;
  color: #0b5243;
}
.watermark span {
  font-size: 15px;
  line-height: 18px;
  color: #b4dedb;
}
```
